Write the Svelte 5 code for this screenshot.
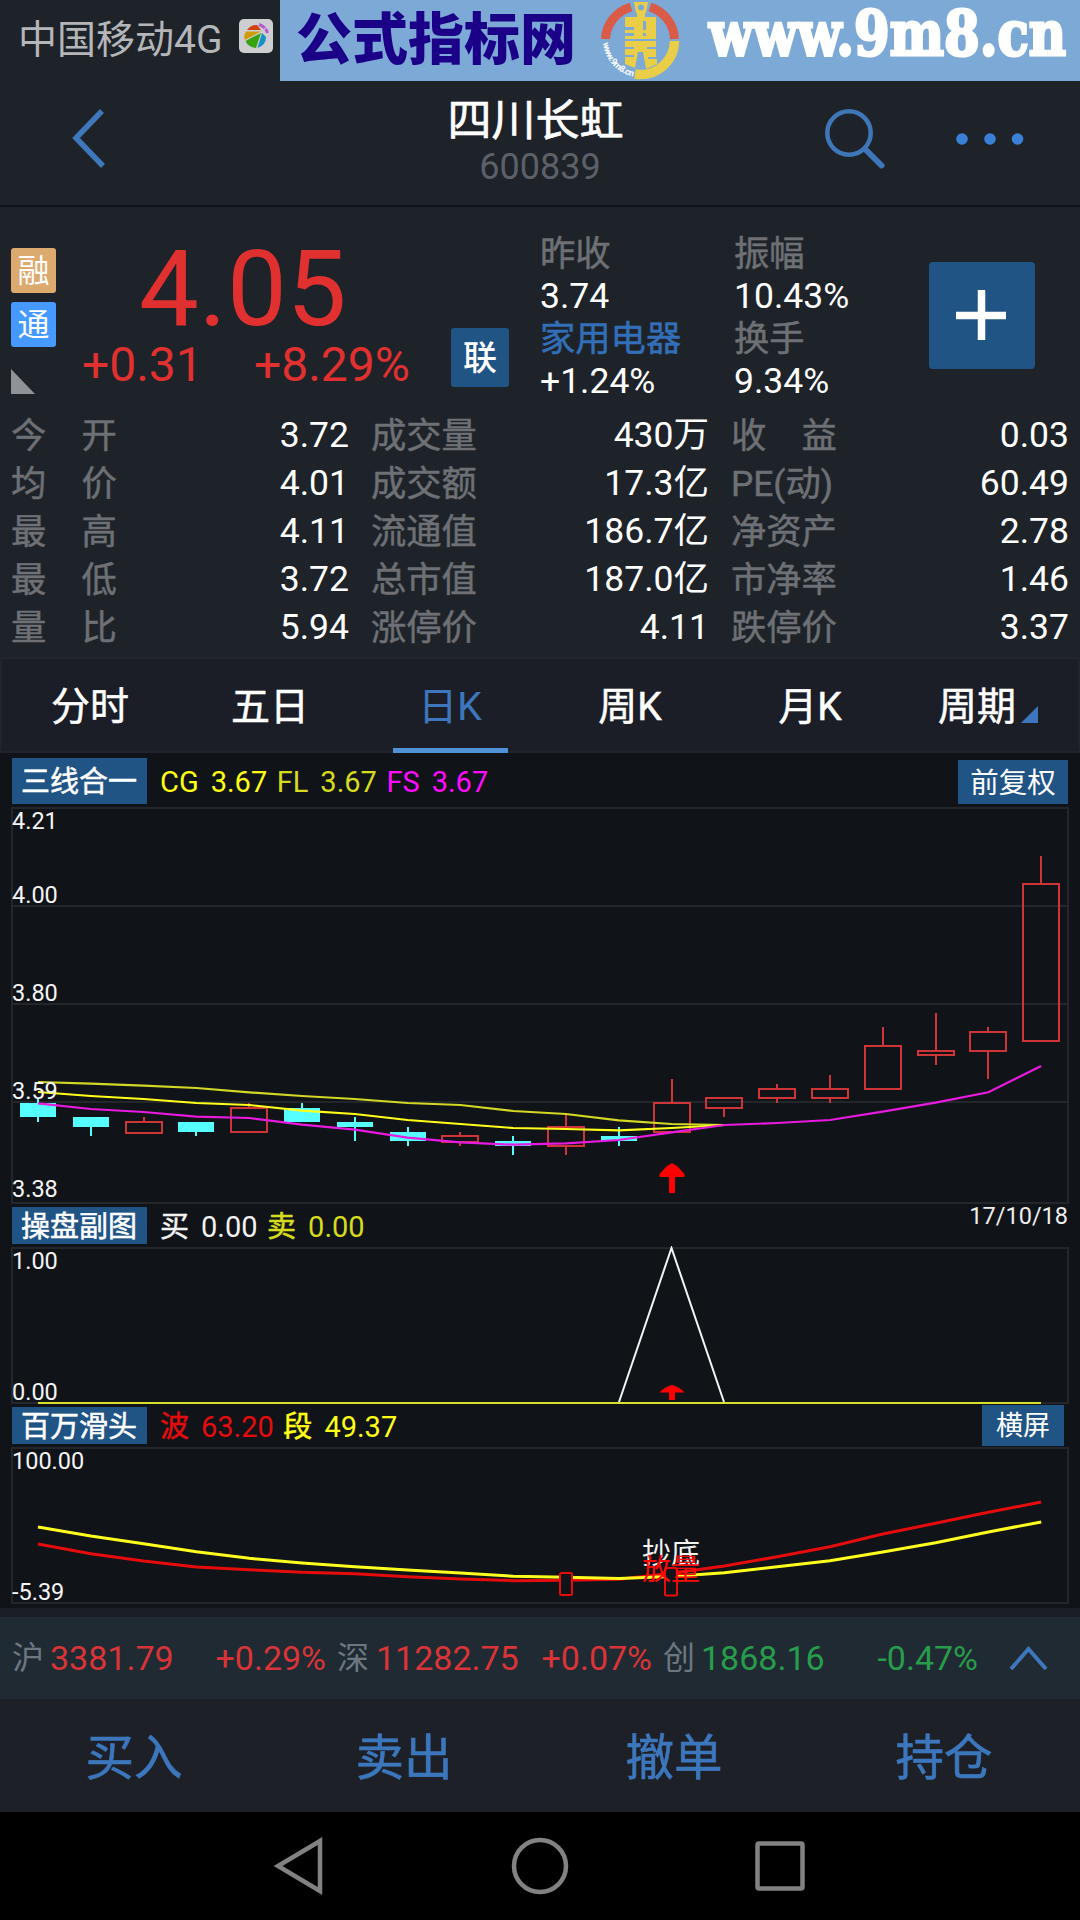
<script>
  const stats = [
    ['今　开', '3.72', '成交量', '430万', '收　益', '0.03'],
    ['均　价', '4.01', '成交额', '17.3亿', 'PE(动)', '60.49'],
    ['最　高', '4.11', '流通值', '186.7亿', '净资产', '2.78'],
    ['最　低', '3.72', '总市值', '187.0亿', '市净率', '1.46'],
    ['量　比', '5.94', '涨停价', '4.11', '跌停价', '3.37'],
  ];
  const tabs = ['分时', '五日', '日K', '周K', '月K', '周期'];
  const actions = ['买入', '卖出', '撤单', '持仓'];
  const indices = [
    { name: '沪', value: '3381.79', change: '+0.29%', dir: 'up' },
    { name: '深', value: '11282.75', change: '+0.07%', dir: 'up' },
    { name: '创', value: '1868.16', change: '-0.47%', dir: 'down' },
  ];

  // Bars are spaced evenly across the plot.
  const px = (i) => 38 + i * 52.8;
  const line = (ys) => ys.map((y, i) => `${px(i).toFixed(1)},${y}`).join(' ');

  // [rising, body top, body bottom, wick top, wick bottom]
  const candles = [
    [0, 1103, 1117, 1099, 1122], [0, 1117, 1127, 1117, 1136], [1, 1122, 1133, 1117, 1133],
    [0, 1122, 1132, 1122, 1136], [1, 1108, 1132, 1103, 1132], [0, 1108, 1122, 1103, 1122],
    [0, 1122, 1127, 1117, 1141], [0, 1132, 1141, 1127, 1146], [1, 1136, 1142, 1132, 1146],
    [0, 1141, 1146, 1136, 1155], [1, 1127, 1146, 1114, 1155], [0, 1136, 1141, 1127, 1146],
    [1, 1103, 1132, 1079, 1132], [1, 1098, 1108, 1098, 1117], [1, 1089, 1098, 1084, 1103],
    [1, 1089, 1098, 1075, 1103], [1, 1046, 1089, 1027, 1089], [1, 1051, 1055, 1013, 1065],
    [1, 1032, 1051, 1027, 1079], [1, 884, 1041, 856, 1041],
  ];
  const fl = [1082, 1083.7, 1085.7, 1088, 1092.3, 1096, 1099, 1103, 1105, 1111, 1114, 1120.3, 1124, 1125];
  const cg = [1092, 1096, 1099, 1103, 1105, 1110.7, 1114, 1120, 1124, 1128, 1129, 1130.3, 1128, 1125];
  const fs = [1103.3, 1109, 1112, 1116.7, 1118, 1124.7, 1129.7, 1137.7, 1142.3, 1144.7, 1143.3, 1140, 1132.3, 1125, 1123, 1120, 1111.7, 1102.7, 1092.3, 1066];
  const duan = [1527, 1536, 1543.7, 1551.7, 1558.3, 1563, 1566.7, 1570, 1573, 1576.3, 1577.3, 1578.5, 1576.5, 1572.7, 1566.7, 1560.7, 1552, 1542.7, 1532, 1522];
  const bo = [1544, 1553.7, 1561, 1567, 1569.7, 1572.3, 1573.7, 1576.7, 1579, 1580.7, 1580.3, 1579.3, 1573.3, 1566, 1556.7, 1546.7, 1534, 1523.3, 1512.3, 1502];
  const scale = [['4.21', 829], ['4.00', 903], ['3.80', 1001], ['3.59', 1099], ['3.38', 1197]];
</script>

<div class="screen">
  <div class="status">
    <span class="carrier">中国移动4G</span>
    <svg class="app" width="34" height="34" viewBox="0 0 34 34">
      <rect width="34" height="34" rx="5" fill="#cdced2" />
      <path d="M8 11 Q12 5.500 18 6 L22 11Z" fill="#d0450f" />
      <path d="M20 5.500 Q27 8 28.500 14" fill="none" stroke="#b85ad0" stroke-width="3" stroke-dasharray="7 1" />
      <path d="M7 12.500H22L6 21Q4 17 7 12.500Z" fill="#cf9d0c" />
      <path d="M6.500 22L22 14L17 29Q9 28 6.500 22Z" fill="#36a30c" />
      <path d="M23 14L18.500 29Q27 26 27 18Z" fill="#1591c4" />
    </svg>
    <div class="banner">
      <span class="brand">公式指标网</span>
      <svg class="logo" width="80" height="81" viewBox="0 0 80 81">
        <path d="M5.500 39A35 35 0 0 1 31 7" fill="none" stroke="#d95b48" stroke-width="9" />
        <path d="M50 7A35 35 0 0 1 74.500 39" fill="none" stroke="#d95b48" stroke-width="9" />
        <path d="M74.500 41A34 34 0 0 1 35 74" fill="none" stroke="#ebce48" stroke-width="9.500" />
        <path fill="#ebce48" fill-rule="evenodd" d="M34 2H48L46 13H45V17H56V39H25V36H34V33H25V30H34V27H25V17H37V13H36ZM41 4.500A3 3 0 1 0 41 10.500A3 3 0 1 0 41 4.500ZM43 21V30H46V21ZM43 33V36H46V33Z" />
        <path fill="#ebce48" d="M25 41H56V47H47V49H56V57H48V59H57V64L46 69L43 52H38L35 68L25 64V57H34V55H25V49H34V47H25Z" />
        <path id="ring" d="M3 43A38 38 0 0 0 31 76" fill="none" />
        <text class="ringtext"><textPath href="#ring">www.9m8.cn</textPath></text>
      </svg>
      <svg class="site" width="370" height="81" viewBox="0 0 370 81">
        <text x="3" y="54.500" textLength="357" lengthAdjust="spacingAndGlyphs">www.9m8.cn</text>
      </svg>
    </div>
  </div>

  <header>
    <svg class="back" width="40" height="66" viewBox="0 0 40 66"><path d="M32 6L6 33L33 61" fill="none" stroke="#3e77ba" stroke-width="5.500" /></svg>
    <div class="title"><span class="name">四川长虹</span><span class="code">600839</span></div>
    <div class="tools">
      <svg width="62" height="62" viewBox="0 0 62 62">
        <g fill="none" stroke="#3e76b8"><circle cx="25" cy="25" r="21.700" stroke-width="4.500" /><path d="M41 41L57.500 57.500" stroke-width="6" stroke-linecap="round" /></g>
      </svg>
      <svg width="70" height="14" viewBox="0 0 70 14" fill="#3b80d6"><circle cx="7" cy="7" r="5.800" /><circle cx="35" cy="7" r="5.800" /><circle cx="62.500" cy="7" r="5.800" /></svg>
    </div>
  </header>

  <section class="quote">
    <div class="marks">
      <span class="mark orange">融</span>
      <span class="mark azure">通</span>
      <svg width="24" height="25" viewBox="0 0 24 25"><path d="M0 0L24 25H0Z" fill="#8f9397" /></svg>
    </div>
    <div class="price">
      <div class="last">4.05</div>
      <div class="delta"><span>+0.31</span><span>+8.29%</span></div>
    </div>
    <span class="link">联</span>
    <div class="facts">
      <span class="dim">昨收</span><span class="dim">振幅</span>
      <span>3.74</span><span>10.43%</span>
      <span class="blue">家用电器</span><span class="dim">换手</span>
      <span>+1.24%</span><span>9.34%</span>
    </div>
    <svg class="plus" width="106" height="107" viewBox="0 0 106 107"><rect width="106" height="107" rx="4" fill="#1f5485" /><path d="M27 53.500H77M52.500 28V78" stroke="#fff" stroke-width="7.500" /></svg>
  </section>

  <section class="stats">
    {#each stats as r}
      <span class="dim">{r[0]}</span><span class="val">{r[1]}</span>
      <span class="dim second">{r[2]}</span><span class="val">{r[3]}</span>
      <span class="dim third">{r[4]}</span><span class="val">{r[5]}</span>
    {/each}
  </section>

  <nav class="tabs">
    {#each tabs as t, i}
      <div class="tab" class:active={i === 2} class:more={i === 5}>
        <span>{t}</span>
        {#if i === 5}<svg width="17" height="17" viewBox="0 0 17 17"><path d="M17 0V17H0Z" fill="#3d76bd" /></svg>{/if}
      </div>
    {/each}
  </nav>

  <section class="charts">
    <div class="bar first">
      <span class="tag">三线合一</span>
      <div class="legend">
        <span class="cg"><b>CG</b>3.67</span><span class="fl"><b>FL</b>3.67</span><span class="fs"><b>FS</b>3.67</span>
      </div>
      <span class="chip">前复权</span>
    </div>
    <svg width="1080" height="400" viewBox="0 806 1080 400">
      <path class="frame" d="M12 808H1068V1203H12ZM12 906H1068M12 1004H1068M12 1102H1068" />
      {#each candles as [up, top, bottom, high, low], i}
        {#if up}
          <g class="rise">
            <rect x={Math.round(px(i)) - 18} y={top} width="36" height={bottom - top} />
            <path d="M{Math.round(px(i))} {high}V{top}M{Math.round(px(i))} {bottom}V{low}" />
          </g>
        {:else}
          <g class="fall">
            <rect x={Math.round(px(i)) - 18} y={top} width="36" height={bottom - top} />
            <rect x={Math.round(px(i)) - 1} y={high} width="2" height={low - high} />
          </g>
        {/if}
      {/each}
      <g class="thin">
        <polyline points={line(fl)} stroke="#d2d824" />
        <polyline points={line(cg)} stroke="#ffff1a" />
        <polyline points={line(fs)} stroke="#e81ae0" />
      </g>
      <path class="signal" d="M672 1163L677 1166L684.500 1174V1177H675V1193H669V1177H659.500V1174L667 1166Z" />
      {#each scale as [label, y]}<text class="axis" x="12" {y}>{label}</text>{/each}
    </svg>

    <div class="bar second-bar">
      <span class="tag">操盘副图</span>
      <div class="legend">
        <span class="white"><b>买</b>0.00</span><span class="fl"><b>卖</b>0.00</span>
      </div>
      <span class="date">17/10/18</span>
    </div>
    <svg width="1080" height="159" viewBox="0 1246 1080 159">
      <path class="frame" d="M12 1248H1068V1403H12Z" />
      <path d="M619 1402L671.500 1248L724 1402" fill="none" stroke="#f4f4f4" stroke-width="2" />
      <path d="M38 1403H1041" stroke="#d7e02b" stroke-width="2" />
      <path class="signal" d="M672 1385Q680 1387 684.500 1392.500H675V1400H669V1392.500H659.500Q664 1387 672 1385Z" />
      <text class="axis" x="12" y="1269">1.00</text>
      <text class="axis" x="12" y="1400">0.00</text>
    </svg>

    <div class="bar third-bar">
      <span class="tag">百万滑头</span>
      <div class="legend">
        <span class="red"><b>波</b>63.20</span><span class="cg"><b>段</b>49.37</span>
      </div>
      <span class="chip wide">横屏</span>
    </div>
    <svg width="1080" height="162" viewBox="0 1446 1080 162">
      <path class="frame" d="M12 1448H1068V1603H12Z" />
      <g class="thick">
        <polyline points={line(bo)} stroke="#e60c0c" />
        <polyline points={line(duan)} stroke="#ffff1e" />
      </g>
      <rect class="box" x="560" y="1573" width="12" height="22" rx="1.500" />
      <text class="note white" x="642" y="1564">抄底</text>
      <rect class="box" x="665" y="1568" width="12" height="27.500" rx="1.500" />
      <text class="note crimson" x="642" y="1580">放量</text>
      <text class="axis" x="12" y="1469">100.00</text>
      <text class="axis" x="12" y="1600">-5.39</text>
    </svg>
  </section>

  <div class="strip"></div>
  <section class="indices">
    {#each indices as x}
      <span class="iname">{x.name}</span><span class={x.dir}>{x.value}</span><span class="pct {x.dir}">{x.change}</span>
    {/each}
    <svg width="39" height="26" viewBox="0 0 39 26"><path d="M2 24L19.500 4L37 24" fill="none" stroke="#3e77ba" stroke-width="4" /></svg>
  </section>

  <section class="actions">
    {#each actions as a}<span>{a}</span>{/each}
  </section>

  <footer>
    <svg width="56" height="60" viewBox="0 0 56 60"><path d="M48 5V55L6 30Z" /></svg>
    <svg width="60" height="60" viewBox="0 0 60 60"><circle cx="30" cy="30" r="26" /></svg>
    <svg width="56" height="60" viewBox="0 0 56 60"><rect x="5.500" y="7.500" width="45" height="45" rx="1.500" /></svg>
  </footer>
</div>

<style>
  :global(body) { background: #000; }
  .screen {
    width: 1080px; height: 1920px; overflow: hidden;
    background: #1e2329; color: #fff;
    font-family: Roboto, "Noto Sans CJK SC", sans-serif;
    display: flex; flex-direction: column;
  }
  svg { display: block; flex: none; }
  span { white-space: nowrap; }

  .status { height: 81px; display: flex; flex: none; }
  .carrier { width: 221px; padding: 2px 0 3px 18px; box-sizing: border-box; font-size: 39px; line-height: 76px; color: #b4b6b9; }
  .app { margin: 19px 7px 0 18px; }
  .banner { flex: 1; height: 81px; background: #7da9d6; display: flex; }
  .brand { margin-left: 16px; width: 284px; font-size: 56px; line-height: 81px; font-weight: 900; color: #1b0088; }
  .logo { margin-left: 20px; }
  .ringtext { font: 700 9px Roboto, sans-serif; letter-spacing: -0.5px; fill: #fff; }
  .site { margin-left: 26px; }
  .site text { font: 700 62px "DejaVu Serif", serif; fill: #fff; stroke: #fff; stroke-width: 3px; stroke-linejoin: miter; }

  header {
    height: 126px; flex: none; box-sizing: border-box; border-bottom: 2px solid #10141c;
    display: grid; grid-template-columns: 1fr 300px 1fr;
  }
  .back { margin: 24px 0 0 70px; }
  .title { display: flex; flex-direction: column; align-items: center; padding-top: 13px; }
  .name { font-size: 44px; line-height: 54px; margin-right: 9px; -webkit-text-stroke: 0.7px; }
  .code { font-size: 36px; line-height: 38px; color: #5c6068; }
  .tools { display: flex; align-items: flex-start; padding: 27px 0 0 134px; }
  .tools svg + svg { margin: 23.500px 0 0 69px; }

  .quote { height: 203px; flex: none; display: flex; }
  .marks { width: 45px; margin: 41px 0 0 11px; display: flex; flex-direction: column; gap: 9px; }
  .mark { height: 45px; border-radius: 3px; font-size: 32px; line-height: 47px; text-align: center; }
  .orange { background: #dca96e; }
  .azure { background: #4699ff; }
  .marks svg { margin-top: 13px; }
  .price { width: 395px; color: #e03030; }
  .last { margin: 27px 0 0 83px; font-size: 106.500px; line-height: 110px; }
  .delta { display: flex; padding-left: 26px; font-size: 48px; line-height: 48px; margin-top: -3px; }
  .delta span { width: 172px; }
  .link {
    width: 58px; height: 59px; margin-top: 121px; border-radius: 3px; background: #1f5485;
    font-size: 34px; line-height: 61px; text-align: center; font-weight: 500;
  }
  .facts {
    margin: 25px 0 0 31px; width: 389px; font-size: 35.500px;
    display: grid; grid-template-columns: 194px 1fr; grid-auto-rows: 42.500px; line-height: 43px; align-content: start;
  }
  .dim, .blue { position: relative; top: 1px; -webkit-text-stroke: 0.5px; font-size: 35.300px; }
  .dim { color: #6d7074; }
  .blue { color: #336fb8; }
  .plus { margin-top: 55px; }

  .stats {
    height: 247px; flex: none; padding: 1px 11px 0 11px; box-sizing: border-box;
    display: grid; grid-template-columns: 180px 158px 180px 180px 180px 1fr; grid-auto-rows: 48.100px;
    font-size: 35.500px; line-height: 48px;
  }
  .val { text-align: right; }
  .second { padding-left: 22px; }
  .third { padding-left: 22px; }

  .tabs {
    height: 96px; flex: none; box-sizing: border-box; background: #1b1e26; border: 2px solid #21242c;
    display: grid; grid-template-columns: repeat(6, 180px); width: 1080px;
  }
  .tab { margin-left: -4px; position: relative; display: flex; justify-content: center; align-items: center; font-size: 39px; line-height: 92px; padding-top: 4px; height: 88px; -webkit-text-stroke: 0.5px; }
  .active { color: #3d76bd; -webkit-text-stroke: 0.2px; }
  .active::after { content: ""; position: absolute; left: 35px; bottom: -2px; width: 115px; height: 5px; background: #5191d6; }
  .more { padding-right: 4px; }
  .more svg { margin: 14px 0 0 5px; }

  .charts { height: 855px; flex: none; background: #101318; }
  .bar { display: flex; padding: 0 12px; font-size: 29px; }
  .first { height: 53px; padding-top: 5px; box-sizing: border-box; }
  .second-bar { height: 40px; padding-top: 1px; box-sizing: border-box; }
  .third-bar { height: 41px; padding-top: 2px; box-sizing: border-box; }
  .tag { width: 134px; padding-right: 1px; height: 37px; line-height: 40px; text-align: center; background: #1f5485; -webkit-text-stroke: 0.5px; }
  .first .tag { height: 46px; line-height: 49px; }
  .legend { flex: 1; display: flex; gap: 9.500px; padding-left: 13px; line-height: 41px; }
  .first .legend { line-height: 49px; }
  .legend b { font-weight: 400; margin-right: 12px; }
  .second-bar b, .third-bar b { -webkit-text-stroke: 0.5px; }
  .cg { color: #ffff14; }
  .fl { color: #d6dc1c; }
  .fs { color: #ff0cff; }
  .red { color: #e60c0c; }
  .white { color: #f2f2f2; fill: #f2f2f2; }
  .chip { width: 110px; height: 44px; margin-top: 2px; background: #1f5485; text-align: center; font-size: 28.500px; line-height: 47px; }
  .wide { width: 82px; height: 41px; margin: -2px 4px 0 0; font-size: 27px; line-height: 42px; }
  .date { font-size: 23.500px; line-height: 19px; color: #eee; }
  .frame { fill: none; stroke: #23272c; stroke-width: 2; }
  .rise { fill: none; stroke: #cf3436; stroke-width: 2; }
  .fall { fill: #55ffff; }
  .thin { fill: none; stroke-width: 2.200; }
  .thick { fill: none; stroke-width: 3; }
  .signal { fill: #ff0000; }
  .axis { font-size: 23.500px; fill: #f5f5f5; }
  .box { fill: #101318; stroke: #e60c0c; stroke-width: 2; }
  .note { font-size: 29px; }
  .crimson { fill: #ff0808; }

  .strip { height: 9px; flex: none; background: #1b1e26; }
  .indices {
    height: 82px; flex: none; background: #202a33; font-size: 34px; line-height: 81px;
    display: grid; align-items: center; padding-left: 12px;
    grid-template-columns: 38px 123px 153px 50px 127px 149px 49px 123px 154px 1fr;
  }
  .iname { color: #6e7780; font-size: 32px; }
  .iname:nth-of-type(n + 2) { padding-left: 11px; }
  .pct { text-align: right; }
  .up { color: #d93437; }
  .down { color: #279d4c; }
  .indices svg { margin-left: 31px; }

  .actions { height: 113px; flex: none; background: #1d2127; display: grid; grid-template-columns: repeat(4, 1fr); text-align: center; font-size: 48.500px; line-height: 120px; color: #3c77bd; -webkit-text-stroke: 0.6px; }
  .actions span { margin-left: -2px; }
  footer { height: 108px; background: #000; display: flex; justify-content: center; align-items: center; gap: 182px; }
  footer svg { fill: none; stroke: #828282; stroke-width: 4.500; }
</style>
